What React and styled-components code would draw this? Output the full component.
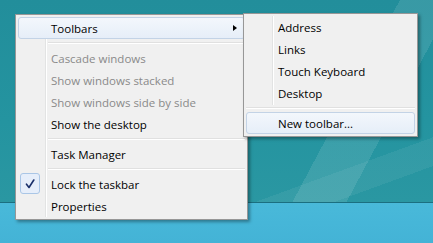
import React from 'react';
import styled, { createGlobalStyle, css } from 'styled-components';

const GlobalStyle = createGlobalStyle`
  html, body {
    margin: 0;
    padding: 0;
    width: 433px;
    height: 243px;
    overflow: hidden;
  }
  body {
    font-family: "Open Sans", "Noto Sans", "Liberation Sans", sans-serif;
  }
`;

const Screen = styled.div`
  position: relative;
  width: 433px;
  height: 243px;
  display: flex;
  flex-direction: column;
  overflow: hidden;
`;

const Desktop = styled.div`
  flex: 1;
  background:
    linear-gradient(118deg, transparent 0 74%, rgba(255,255,255,0.10) 74% 84%, transparent 84%),
    linear-gradient(160deg, transparent 0 82%, rgba(255,255,255,0.06) 82% 90%, transparent 90%),
    linear-gradient(180deg, #228e9b 0%, #2494a0 60%, #2a97a2 100%);
`;

const Taskbar = styled.div`
  height: 40px;
  border-top: 1px solid #1b6f80;
  background: linear-gradient(180deg, #49b9d9 0%, #46b6d8 50%, #44b3d6 100%);
`;

const Menu = styled.div`
  position: absolute;
  left: ${p => p.x}px;
  top: ${p => p.y}px;
  width: ${p => p.w}px;
  box-sizing: border-box;
  padding: 2px;
  background: #f0f0f0;
  border: 1px solid #979797;
  box-shadow: 2px 2px 3px rgba(0, 0, 0, 0.35);
  font-size: 11.5px;
  color: #000;

  &::before {
    content: "";
    position: absolute;
    top: 2px;
    bottom: ${p => p.gutterBottom || 2}px;
    left: ${p => p.gutter}px;
    width: 1px;
    background: #e2e3e3;
    box-shadow: 1px 0 0 #ffffff;
  }
`;

const Item = styled.div`
  position: relative;
  height: 22px;
  display: flex;
  align-items: center;
  padding-left: ${p => p.indent}px;
  box-sizing: border-box;
  border: 1px solid transparent;
  border-radius: 3px;
  white-space: nowrap;
  color: ${p => (p.disabled ? '#8a8a8a' : '#000')};

  ${p => p.hot && css`
    border-color: #c3d3e6;
    background: linear-gradient(180deg, #f3f7fc 0%, #e6eef8 100%);
  `}
`;

const Separator = styled.div`
  height: 8px;
  margin-left: ${p => p.indent}px;
  position: relative;

  &::after {
    content: "";
    position: absolute;
    left: 0;
    right: 0;
    top: 3px;
    height: 1px;
    background: #e0e0e0;
    box-shadow: 0 1px 0 #ffffff;
  }
`;

const Arrow = styled.span`
  position: absolute;
  right: 7px;
  top: 7px;
  width: 0;
  height: 0;
  border-top: 3.5px solid transparent;
  border-bottom: 3.5px solid transparent;
  border-left: 4px solid #000;
`;

const CheckBox = styled.span`
  position: absolute;
  left: 1px;
  top: -1px;
  width: 20px;
  height: 21px;
  box-sizing: border-box;
  border: 1px solid #aac6e6;
  border-radius: 3px;
  background: #e6eefa;
  display: flex;
  align-items: center;
  justify-content: center;
`;

const Check = () => (
  <svg width="10" height="10" viewBox="0 0 10 10">
    <path d="M1.5 5.2 L4 8.5 L8.8 1" fill="none" stroke="#1a2f6a" strokeWidth="1.6" strokeLinecap="round" strokeLinejoin="round" />
  </svg>
);

const App = () => (
  <>
    <GlobalStyle />
    <Screen>
      <Desktop />
      <Taskbar />

      <Menu x={15} y={14} w={233} gutter={29}>
        <Item indent={32} hot>
          Toolbars
          <Arrow />
        </Item>
        <Separator indent={30} />
        <Item indent={32} disabled>Cascade windows</Item>
        <Item indent={32} disabled>Show windows stacked</Item>
        <Item indent={32} disabled>Show windows side by side</Item>
        <Item indent={32}>Show the desktop</Item>
        <Separator indent={30} />
        <Item indent={32}>Task Manager</Item>
        <Separator indent={30} />
        <Item indent={32}>
          <CheckBox><Check /></CheckBox>
          Lock the taskbar
        </Item>
        <Item indent={32}>Properties</Item>
      </Menu>

      <Menu x={243} y={13} w={175} gutter={28} gutterBottom={31}>
        <Item indent={31}>Address</Item>
        <Item indent={31}>Links</Item>
        <Item indent={31}>Touch Keyboard</Item>
        <Item indent={31}>Desktop</Item>
        <Separator indent={0} />
        <Item indent={31} hot>New toolbar...</Item>
      </Menu>
    </Screen>
  </>
);

export default App;
